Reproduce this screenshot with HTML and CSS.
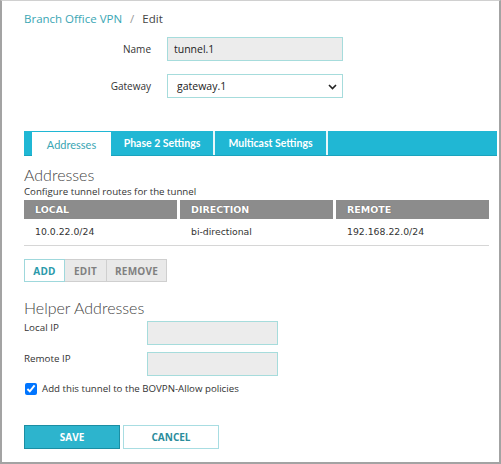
FILE: index.html
```
<!DOCTYPE html>
<html>
<head>
<meta charset="utf-8">
<link rel="stylesheet" href="styles.css">
</head>
<body>
<div class="page">
  <div class="crumbs"><a class="crumb-link">Branch Office VPN</a><span class="crumb-sep">/</span><span class="crumb-cur">Edit</span></div>

  <div class="form">
    <label class="lbl">Name</label>
    <div class="field"><input class="txt txt-ro" type="text" value="tunnel.1" readonly></div>
    <label class="lbl">Gateway</label>
    <div class="field">
      <div class="select"><span>gateway.1</span>
        <svg class="chev" width="9" height="6" viewBox="0 0 9 6"><path d="M1 1l3.5 3.5L8 1" fill="none" stroke="#222" stroke-width="1.6"/></svg>
      </div>
    </div>
  </div>

  <div class="tabs">
    <div class="tab-lead"></div>
    <div class="tab tab-active">Addresses</div>
    <div class="tab tab-2">Phase 2 Settings</div>
    <div class="tab tab-3">Multicast Settings</div>
    <div class="tab-rest"></div>
  </div>

  <h2 class="h">Addresses</h2>
  <div class="desc">Configure tunnel routes for the tunnel</div>

  <div class="table">
    <div class="th">LOCAL</div>
    <div class="th">DIRECTION</div>
    <div class="th">REMOTE</div>
    <div class="td">10.0.22.0/24</div>
    <div class="td">bi-directional</div>
    <div class="td">192.168.22.0/24</div>
  </div>

  <div class="btn-group">
    <button class="gbtn gbtn-on">ADD</button>
    <button class="gbtn">EDIT</button>
    <button class="gbtn">REMOVE</button>
  </div>

  <h2 class="h h-helper">Helper Addresses</h2>
  <div class="helper">
    <label class="hl">Local IP</label>
    <input class="txt hin" type="text">
    <label class="hl">Remote IP</label>
    <input class="txt hin" type="text">
  </div>

  <label class="chk"><input type="checkbox" checked><span>Add this tunnel to the BOVPN-Allow policies</span></label>

  <div class="actions">
    <button class="btn btn-save">SAVE</button>
    <button class="btn btn-cancel">CANCEL</button>
  </div>
</div>
</body>
</html>
```

FILE: styles.css
```
html, body { margin: 0; padding: 0; background: #fff; }
.page {
  width: 501px; height: 464px; box-sizing: border-box;
  border: 1px solid #a3a3a3; border-top-color: #d0d0d0; border-width: 1px 2px 2px 2px;
  padding: 0 2px 0 22px;
  font-family: "Open Sans", "Liberation Sans", sans-serif;
  color: #333;
}
.crumbs { margin-top: 10px; height: 16px; line-height: 16px; font-size: 11.5px; }
.crumb-link { color: #3aa6b4; }
.crumb-sep { color: #999; margin: 0 8px; }
.crumb-cur { color: #444; }

.form {
  display: grid; grid-template-columns: 127px 176px; column-gap: 16px; row-gap: 13px;
  margin-top: 9px; align-items: center;
}
.lbl { text-align: right; font-size: 10px; color: #333; }
.txt {
  box-sizing: border-box; height: 24px; border: 1px solid #a6dcdc; font-family: inherit;
  font-size: 10.5px; padding: 0 9px; color: #222; outline: none; margin: 0;
}
.field .txt { width: 176px; }
.txt-ro { background: #ececec; padding-left: 6px; }
.select {
  box-sizing: border-box; height: 24px; border: 1px solid #a6dcdc; background: #fff;
  display: flex; align-items: center; justify-content: space-between;
  padding: 0 5px 0 9px; font-size: 10.5px; color: #222;
}
.chev { margin-top: 1px; }

.tabs {
  display: flex; height: 25px; margin-top: 33px; background: #20b7d4;
  border-bottom: 1px solid #1aa3bd; box-sizing: border-box;
}
.tab-lead { width: 8px; }
.tab {
  display: flex; align-items: center; justify-content: center;
  font-family: "Lato", "Open Sans", sans-serif;
  font-size: 10.5px; color: #fff; font-weight: 700;
}
.tab-active {
  width: 79px; background: #fff; color: #3aa6b4; font-weight: 400; font-size: 11px;
  margin-top: 1px; margin-bottom: -1px;
}
.tab-2 { width: 102px; border-right: 2px solid #e8f7fa; }
.tab-3 { width: 111px; border-right: 2px solid #e8f7fa; }
.tab-rest { flex: 1; }

.h {
  margin: 9px 0 0 0; font-family: "Lato", "Open Sans", sans-serif; font-weight: 300;
  font-size: 16px; line-height: 20px; color: #444;
}
.desc { font-size: 9.7px; line-height: 14px; color: #333; margin-top: 0; }

.table {
  display: grid; grid-template-columns: 153px 153px 153px; column-gap: 3px;
  width: 465px; border-bottom: 1px solid #d6d6d6; margin-top: 1px;
}
.th {
  background: #8c8c8c; color: #fff; font-family: "DejaVu Sans", Verdana, sans-serif;
  font-weight: bold; font-size: 9.5px; height: 19px; line-height: 19px; padding-left: 11px;
  text-shadow: 0 0 1px #555;
}
.td {
  font-family: "DejaVu Sans", Verdana, sans-serif; font-size: 9.3px; color: #333;
  height: 26px; line-height: 26px; padding-left: 11px;
}

.btn-group { display: flex; margin-top: 13px; }
.gbtn {
  box-sizing: border-box; height: 23px; border: 1px solid #cfcfcf; background: #e9e9e9;
  font-family: "Open Sans", sans-serif; font-weight: 700; font-size: 10px; color: #808080;
  padding: 0 6px; margin: 0; letter-spacing: 0.2px;
}
.gbtn + .gbtn { border-left: none; }
.gbtn-on { background: #fff; color: #2b9aab; border-color: #9fd8dc; width: 41px; }
.gbtn:nth-child(2) { width: 42px; }
.gbtn:nth-child(3) { width: 60px; }

.h-helper { margin-top: 16px; }
.helper {
  display: grid; grid-template-columns: 123px 131px; row-gap: 7px;
  margin-top: 3px; align-items: start;
}
.hl { font-size: 9.8px; color: #333; line-height: 14px; }
.hin { width: 131px; height: 24px; background: #ececec; }

.chk { display: flex; align-items: center; margin-top: 6px; font-size: 9.7px; color: #333; }
.chk input { margin: 0 5px 0 1px; width: 12px; height: 12px; }

.actions { display: flex; gap: 3px; margin-top: 30px; }
.btn {
  box-sizing: border-box; width: 96px; height: 24px; font-family: "Open Sans", sans-serif;
  font-weight: 700; font-size: 10px; margin: 0;
}
.btn-save { background: #2db4cd; border: 1px solid #1b8ea3; color: #fff; }
.btn-cancel { background: #fff; border: 1px solid #a8dde2; color: #2b8c9c; }
```
